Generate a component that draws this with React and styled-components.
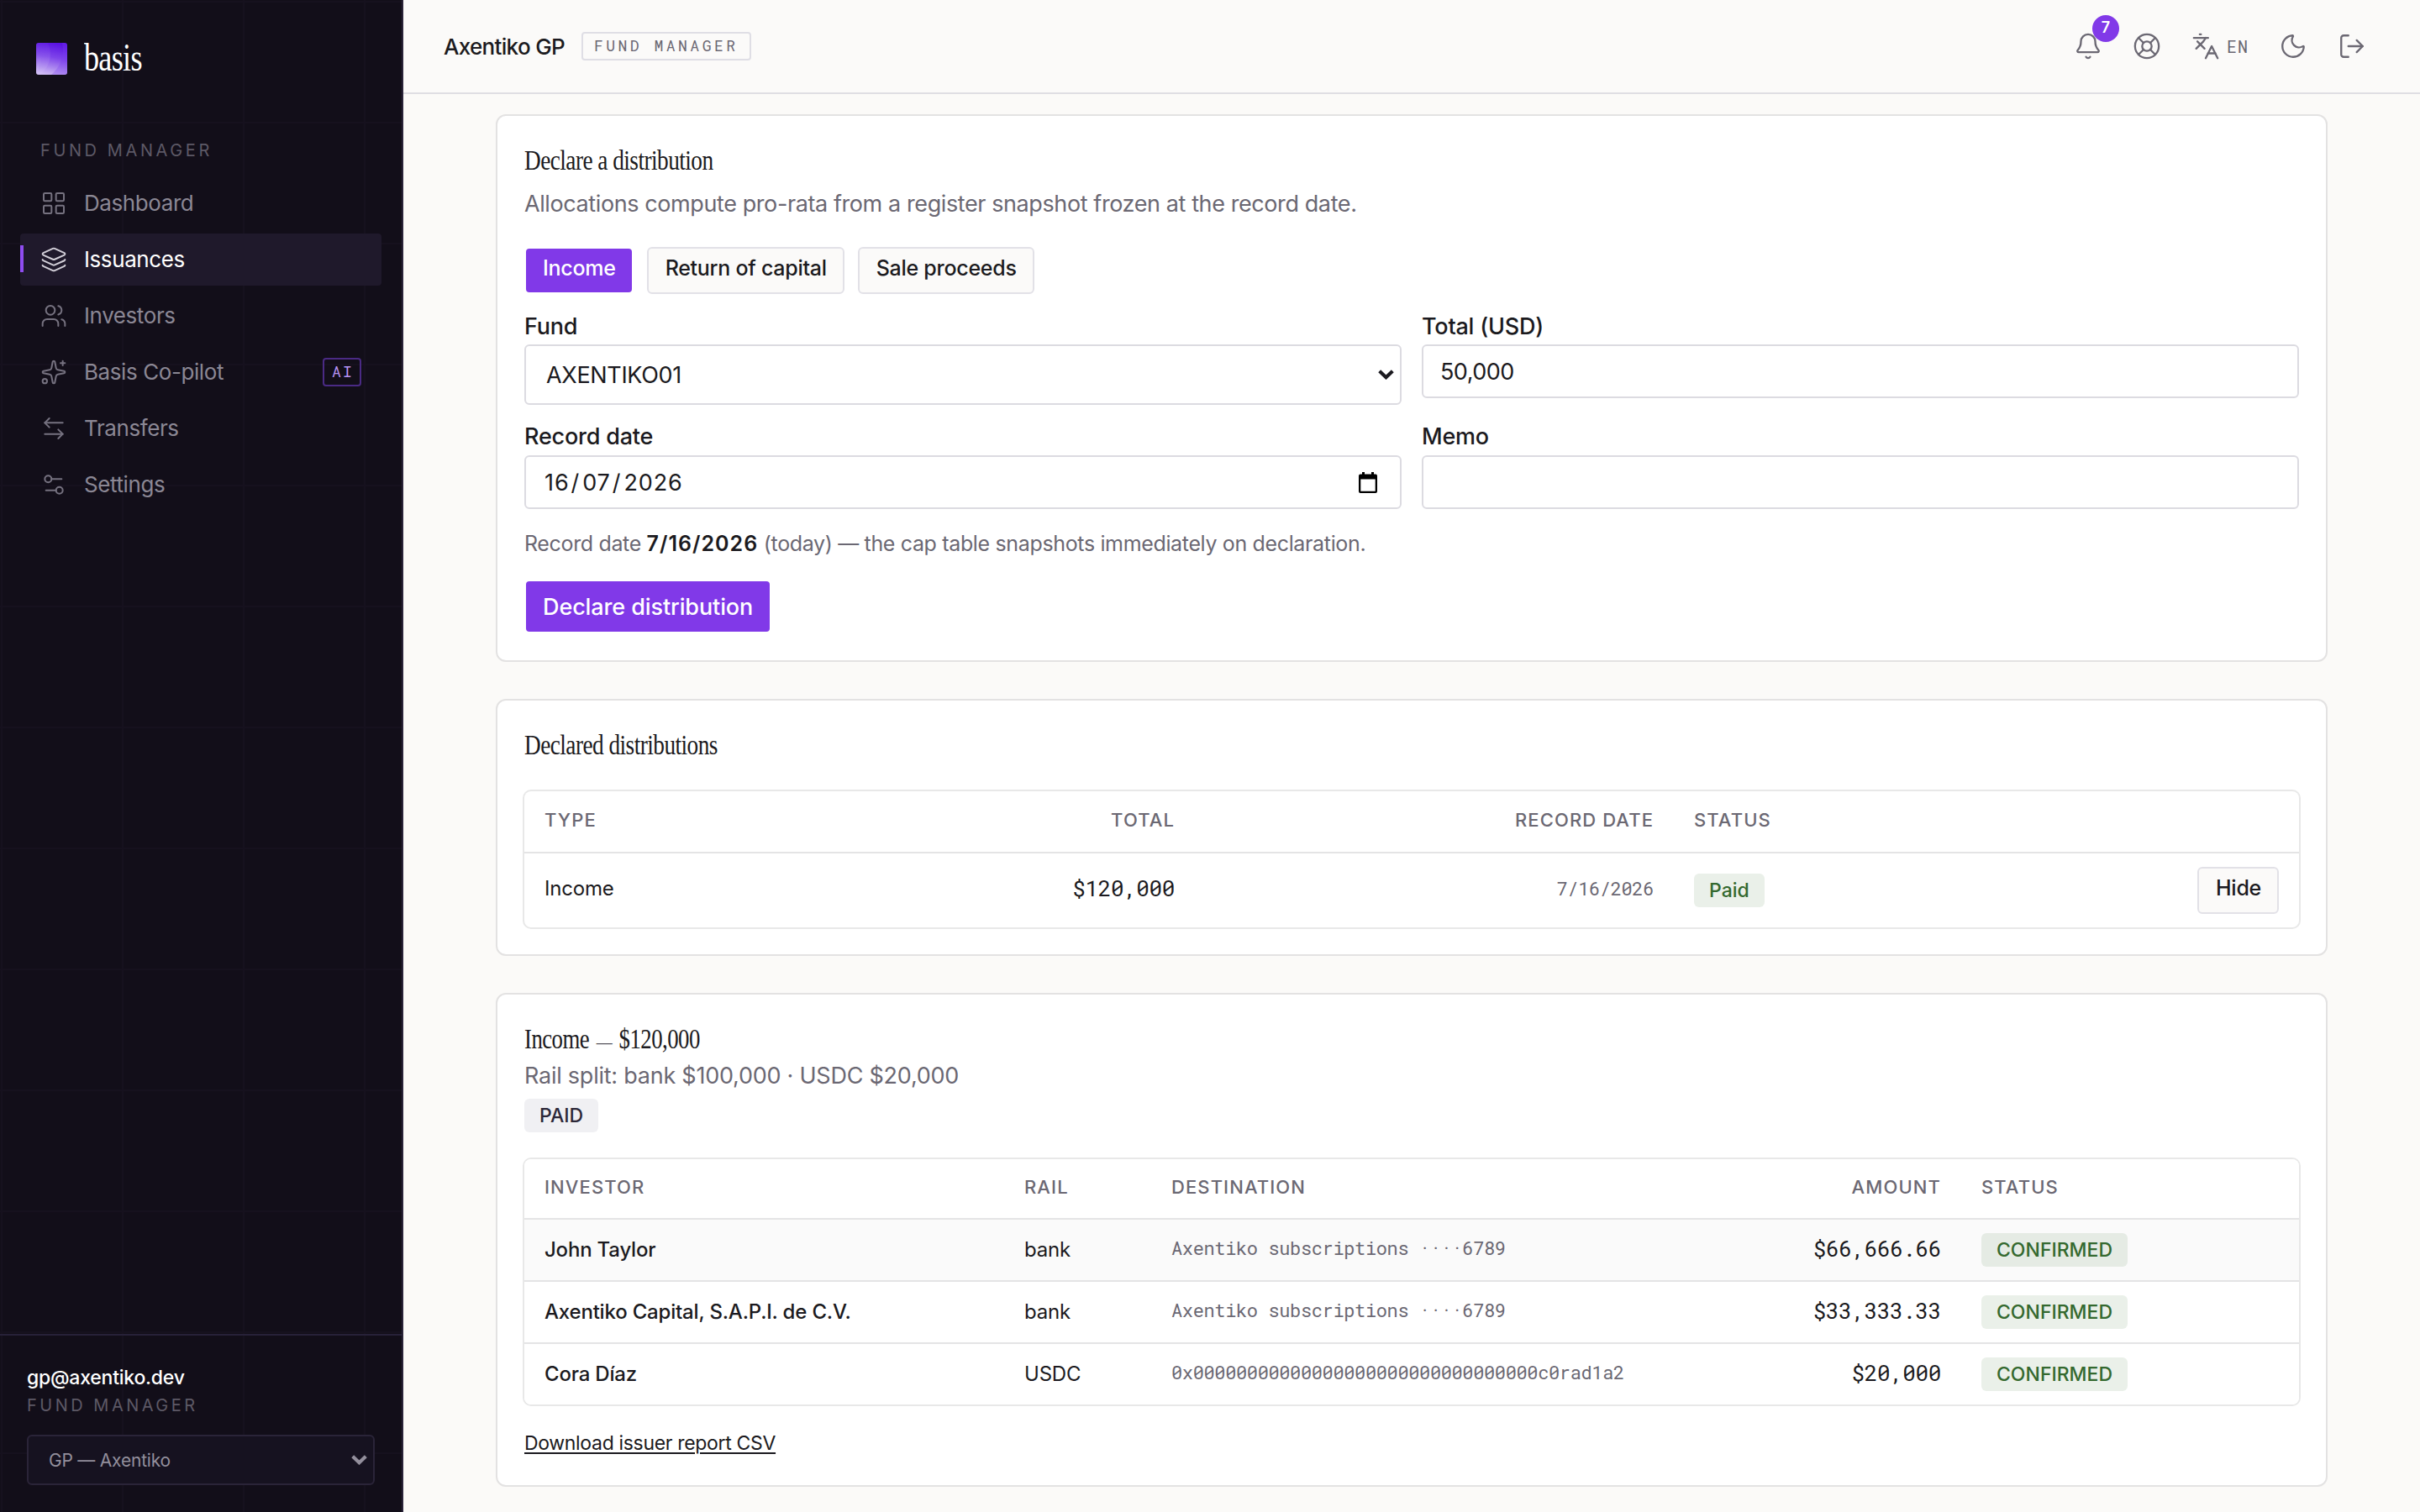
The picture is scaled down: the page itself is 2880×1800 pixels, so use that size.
import styled, { createGlobalStyle } from "styled-components"
import {
    ArrowLeftRight,
    Bell,
    Languages,
    Layers,
    LayoutGrid,
    LifeBuoy,
    LogOut,
    Moon,
    Settings2,
    Sparkles,
    Users,
} from "lucide-react"

const sans = `Inter, "Liberation Sans", sans-serif`;
const mono = `"Roboto Mono", "DejaVu Sans Mono", monospace`;
const serif = `"Liberation Serif", serif`;

const navItems = [
    { label: "Dashboard", icon: LayoutGrid },
    { label: "Issuances", icon: Layers, active: true },
    { label: "Investors", icon: Users },
    { label: "Basis Co-pilot", icon: Sparkles, tag: "AI" },
    { label: "Transfers", icon: ArrowLeftRight },
    { label: "Settings", icon: Settings2 },
];

const payouts = [
    { investor: "John Taylor", rail: "bank", destination: "Axentiko subscriptions ····6789", amount: "$66,666.66" },
    { investor: "Axentiko Capital, S.A.P.I. de C.V.", rail: "bank", destination: "Axentiko subscriptions ····6789", amount: "$33,333.33" },
    { investor: "Cora Díaz", rail: "USDC", destination: "0x00000000000000000000000000000000c0rad1a2", amount: "$20,000" },
];

function Logo() {
    return (
        <svg width="37" height="38" viewBox="0 0 37 38">
            <defs>
                <linearGradient id="base" x1="0.6" y1="0" x2="0.4" y2="1">
                    <stop offset="0" stopColor="#5a12e2" />
                    <stop offset="0.45" stopColor="#7f45ea" />
                    <stop offset="1" stopColor="#cdb8f3" />
                </linearGradient>
                <linearGradient id="wave" x1="0" y1="0" x2="0" y2="1">
                    <stop offset="0" stopColor="#6a2ae6" stopOpacity="0.6" />
                    <stop offset="1" stopColor="#d9cbf6" stopOpacity="0.6" />
                </linearGradient>
                <clipPath id="tile"><rect width="37" height="38" rx="3" /></clipPath>
            </defs>
            <g clipPath="url(#tile)">
                <rect width="37" height="38" fill="url(#base)" />
                <path d="M14 0C19 12 18 26 5 38H0V0Z" fill="url(#wave)" opacity="0.55" />
                <path d="M3 8C7 18 6 28 0 34Z" fill="url(#wave)" opacity="0.6" />
                <path d="M31 0C34 14 30 28 18 38H37V0Z" fill="#7a3cf0" opacity="0.28" />
            </g>
        </svg>
    )
}

function Chevron() {
    return (
        <svg width="19" height="12" viewBox="0 0 19 12" fill="none">
            <path d="M1.7 1.7L9.5 9.2L17.3 1.7" stroke="currentColor" strokeWidth="4.2" />
        </svg>
    )
}

function Calendar() {
    return (
        <svg width="22" height="25" viewBox="0 0 22 25" fill="#000">
            <path fillRule="evenodd" d="M4 0h3v2.5h8V0h3v2.5h2q2 0 2 2V23q0 2-2 2H2q-2 0-2-2V4.500q0-2 2-2h2ZM2.300 8.500V22.700h17.400V8.500Z" />
        </svg>
    )
}

function App() {
    return (
        <Page>
            <GlobalStyle />
            <Sidebar>
                <Brand>
                    <Logo />
                    <BrandName>basis</BrandName>
                </Brand>
                <NavTitle>FUND MANAGER</NavTitle>
                <Nav>
                    {navItems.map(({ label, icon: Icon, active, tag }) => (
                        <NavItem key={label} $active={active}>
                            <Icon size={32} strokeWidth={1.5} />
                            <NavLabel>{label}</NavLabel>
                            {tag && <NavTag>{tag}</NavTag>}
                        </NavItem>
                    ))}
                </Nav>
                <Account>
                    <Email>gp@axentiko.dev</Email>
                    <Role>FUND MANAGER</Role>
                    <OrgSelect>GP — Axentiko<Chevron /></OrgSelect>
                </Account>
            </Sidebar>

            <Main>
                <Header>
                    <OrgName>Axentiko GP</OrgName>
                    <RoleBadge>FUND MANAGER</RoleBadge>
                    <Actions>
                        <IconButton>
                            <Bell size={34} strokeWidth={1.65} />
                            <Count>7</Count>
                        </IconButton>
                        <IconButton><LifeBuoy size={34} strokeWidth={1.65} /></IconButton>
                        <LangButton><Languages size={34} strokeWidth={1.65} /><span>EN</span></LangButton>
                        <IconButton><Moon size={34} strokeWidth={1.65} /></IconButton>
                        <IconButton><LogOut size={34} strokeWidth={1.65} /></IconButton>
                    </Actions>
                </Header>

                <Content>
                    <Card>
                        <Title><span>Declare a distribution</span></Title>
                        <Subtitle>Allocations compute pro-rata from a register snapshot frozen at the record date.</Subtitle>
                        <Kinds>
                            <Button $primary>Income</Button>
                            <Button>Return of capital</Button>
                            <Button>Sale proceeds</Button>
                        </Kinds>
                        <Form>
                            <Field>
                                <Label>Fund</Label>
                                <FundSelect>AXENTIKO01<Chevron /></FundSelect>
                            </Field>
                            <Field>
                                <Label>Total (USD)</Label>
                                <Input defaultValue="50,000" />
                            </Field>
                            <Field>
                                <Label>Record date</Label>
                                <DateInput>
                                    <DateText>16<i>/</i>07<i>/</i>2026</DateText>
                                    <Calendar />
                                </DateInput>
                            </Field>
                            <Field>
                                <Label>Memo</Label>
                                <Input />
                            </Field>
                        </Form>
                        <Hint>Record date <b>7/16/2026</b> (today) — the cap table snapshots immediately on declaration.</Hint>
                        <Submit>Declare distribution</Submit>
                    </Card>

                    <Card>
                        <Title><span>Declared distributions</span></Title>
                        <Table>
                            <DistributionRow $head>
                                <HeadCell>TYPE</HeadCell>
                                <HeadCell $right>TOTAL</HeadCell>
                                <HeadCell $right>RECORD DATE</HeadCell>
                                <HeadCell>STATUS</HeadCell>
                                <HeadCell />
                            </DistributionRow>
                            <DistributionRow>
                                <Cell>Income</Cell>
                                <AmountCell $lift>$120,000</AmountCell>
                                <MonoCell $right>7/16/2026</MonoCell>
                                <StatusCell><Badge>Paid</Badge></StatusCell>
                                <ActionCell><Button>Hide</Button></ActionCell>
                            </DistributionRow>
                        </Table>
                    </Card>

                    <Card>
                        <Title $wide><span>Income <em>—</em> $120,000</span></Title>
                        <Split>Rail split: bank $100,000 · USDC $20,000</Split>
                        <PaidBadge>PAID</PaidBadge>
                        <Table>
                            <PayoutRow $head>
                                <HeadCell>INVESTOR</HeadCell>
                                <HeadCell>RAIL</HeadCell>
                                <HeadCell>DESTINATION</HeadCell>
                                <HeadCell $right>AMOUNT</HeadCell>
                                <HeadCell>STATUS</HeadCell>
                            </PayoutRow>
                            {payouts.map((p, i) => (
                                <PayoutRow key={p.investor} $hover={i === 0}>
                                    <NameCell>{p.investor}</NameCell>
                                    <RailCell>{p.rail}</RailCell>
                                    <MonoCell>{p.destination}</MonoCell>
                                    <AmountCell>{p.amount}</AmountCell>
                                    <StatusCell><Badge>CONFIRMED</Badge></StatusCell>
                                </PayoutRow>
                            ))}
                        </Table>
                        <ReportLink>Download issuer report CSV</ReportLink>
                    </Card>
                </Content>
            </Main>
        </Page>
    )
}

const GlobalStyle = createGlobalStyle`
*, *::before, *::after {
box-sizing: border-box;
}
body {
margin: 0;
background: #fbfaf8;
color: #1b1a20;
font-family: ${sans};
}
`;

const Page = styled.div`
display: flex;
width: 100%;
height: 100vh;
overflow: hidden;
`;

const Sidebar = styled.aside`
display: flex;
flex-direction: column;
width: 480px;
flex-shrink: 0;
border-right: 2px solid #2a2439;
background-color: #120e19;
background-image:
linear-gradient(to right, #16111e 2px, transparent 2px),
linear-gradient(to bottom, #16111e 2px, transparent 2px);
background-size: 144px 144px;
background-position: 1px 1px;
`;

const Brand = styled.div`
display: flex;
align-items: center;
gap: 20px;
height: 38px;
margin: 51px 0 0 43px;
`;

const BrandName = styled.span`
padding-bottom: 4px;
font-family: ${serif};
font-size: 47px;
line-height: 38px;
letter-spacing: -0.02em;
color: #fff;
transform: scaleX(0.77);
transform-origin: left;
`;

const NavTitle = styled.div`
margin: 75px 0 0 48px;
font-size: 20px;
line-height: 30px;
letter-spacing: 0.18em;
color: #5d5966;
`;

const Nav = styled.nav`
display: flex;
flex-direction: column;
gap: 5px;
margin: 17px 24px 0;
`;

const NavItem = styled.a`
display: flex;
align-items: center;
gap: 20px;
position: relative;
height: 62px;
padding: 0 24px;
border-radius: 4px;
background: ${(p) => (p.$active ? "#1f192b" : "transparent")};
color: ${(p) => (p.$active ? "#fff" : "#8b8794")};
svg {
color: ${(p) => (p.$active ? "#d2cfd8" : "#767280")};
}
&::before {
content: "";
display: ${(p) => (p.$active ? "block" : "none")};
position: absolute;
left: 0;
top: 14px;
width: 4px;
height: 32px;
background: #8f4df0;
}
`;

const NavLabel = styled.span`
padding-bottom: 2px;
font-size: 26px;
letter-spacing: -0.016em;
`;

const NavTag = styled.span`
display: flex;
justify-content: center;
width: 46px;
height: 34px;
margin-left: auto;
padding-left: 2px;
border: 2px solid #4a2a84;
border-radius: 4px;
font-family: ${mono};
font-size: 18px;
line-height: 28px;
letter-spacing: 0.12em;
color: #b794f4;
`;

const Account = styled.div`
margin-top: auto;
padding: 33px 32px 32px;
border-top: 2px solid #272138;
`;

const Email = styled.div`
font-size: 23px;
line-height: 34px;
font-weight: 500;
letter-spacing: -0.01em;
color: #fff;
`;

const Role = styled.div`
padding-top: 1px;
font-size: 20px;
line-height: 30px;
letter-spacing: 0.175em;
color: #5d5966;
`;

const OrgSelect = styled.div`
display: flex;
align-items: center;
justify-content: space-between;
width: 414px;
height: 60px;
margin-top: 20px;
padding: 0 7px 0 24px;
border: 2px solid #2a2438;
border-radius: 6px;
background: #161220;
font-size: 21px;
letter-spacing: -0.01em;
color: #938f9c;
`;

const Main = styled.main`
display: flex;
flex-direction: column;
flex: 1;
min-width: 0;
`;

const Header = styled.header`
display: flex;
align-items: center;
height: 112px;
flex-shrink: 0;
padding: 0 48px;
border-bottom: 2px solid #dfdee3;
background: #fbfaf9;
`;

const OrgName = styled.span`
font-size: 26px;
font-weight: 500;
letter-spacing: -0.026em;
`;

const RoleBadge = styled.span`
height: 34px;
width: 202px;
margin-left: 20px;
padding-left: 13px;
border: 2px solid #dfdee5;
border-radius: 4px;
font-family: ${mono};
font-size: 18px;
line-height: 28px;
letter-spacing: 3.5px;
color: #6b6873;
`;

const Actions = styled.div`
display: flex;
gap: 4px;
margin-left: auto;
color: #6b6873;
`;

const IconButton = styled.div`
display: flex;
align-items: center;
justify-content: center;
position: relative;
width: 66px;
height: 66px;
`;

const LangButton = styled.div`
display: flex;
align-items: center;
gap: 8px;
width: 100px;
height: 66px;
padding-left: 16px;
font-family: ${mono};
font-size: 20px;
letter-spacing: 1px;
`;

const Count = styled.span`
position: absolute;
top: -4px;
right: -4px;
width: 32px;
height: 32px;
border-radius: 50%;
background: #8139e8;
color: #fff;
font-family: ${sans};
font-size: 18px;
line-height: 30px;
font-weight: 600;
text-align: center;
`;

const Content = styled.div`
display: flex;
flex-direction: column;
gap: 44px;
padding: 24px 110px 30px;
`;

const Card = styled.section`
padding: 32px;
border: 2px solid #e3e2e2;
border-radius: 12px;
background: #fff;
`;

const Title = styled.h2`
margin: 0;
height: 42px;
font-family: ${serif};
font-size: 34px;
line-height: 42px;
font-weight: 400;
letter-spacing: -0.02em;
span {
display: inline-block;
white-space: nowrap;
transform: scaleX(${(p) => (p.$wide ? 0.788 : 0.803)});
transform-origin: left;
}
em {
margin: 0 3px;
font-size: 24px;
font-style: normal;
color: #55535b;
}
`;

const Subtitle = styled.p`
margin: 10px 0 0;
font-size: 27px;
line-height: 42px;
letter-spacing: -0.015em;
color: #6b6873;
`;

const Kinds = styled.div`
display: flex;
gap: 16px;
margin-top: 30px;
`;

const Button = styled.button`
height: 56px;
padding: 0 19px 6px 20px;
border: 2px solid ${(p) => (p.$primary ? "transparent" : "#e2e1e7")};
border-radius: 6px;
background: ${(p) => (p.$primary ? "#8139e8" : "#fbfaf9")};
background-clip: padding-box;
color: ${(p) => (p.$primary ? "#fff" : "#1b1a20")};
font-family: ${sans};
font-size: 25px;
font-weight: 500;
letter-spacing: -0.011em;
`;

const Form = styled.div`
display: grid;
grid-template-columns: 1fr 1fr;
gap: 20px 24px;
margin-top: 21px;
align-items: start;
`;

const Field = styled.div`
display: flex;
flex-direction: column;
gap: 3px;
&:nth-child(n + 3) {
gap: 4px;
}
`;

const Label = styled.label`
font-size: 27px;
line-height: 36px;
font-weight: 500;
letter-spacing: -0.008em;
`;

const Input = styled.input`
width: 100%;
height: 64px;
padding: 0 20px;
border: 2px solid #dcdbe1;
border-radius: 6px;
background: #fff;
color: #1b1a20;
font-family: ${sans};
font-size: 27px;
letter-spacing: -0.02em;
`;

const FundSelect = styled.div`
display: flex;
align-items: center;
justify-content: space-between;
height: 72px;
padding: 0 7px 0 24px;
border: 2px solid #dcdbe1;
border-radius: 6px;
font-size: 27px;
letter-spacing: -0.012em;
`;

const DateInput = styled.div`
display: flex;
align-items: center;
justify-content: space-between;
height: 64px;
padding: 0 27px 0 22px;
border: 2px solid #dcdbe1;
border-radius: 6px;
font-size: 27px;
`;

const DateText = styled.span`
letter-spacing: 0.9px;
i {
margin: 0 3px 0 2px;
font-style: normal;
}
`;

const Hint = styled.p`
margin: 20px 0 0;
padding-top: 1px;
font-size: 25px;
line-height: 40px;
letter-spacing: -0.014em;
color: #6b6873;
b {
font-weight: 600;
letter-spacing: 0.04em;
color: #1b1a20;
}
`;

const Submit = styled(Button).attrs({ $primary: true })`
display: block;
height: 64px;
margin-top: 23px;
padding: 0 20px;
font-size: 27px;
letter-spacing: -0.004em;
`;

const Table = styled.div`
margin-top: 34px;
border-radius: 8px;
box-shadow: 0 0 0 2px #e8e8e8;
overflow: hidden;
`;

const DistributionRow = styled.div`
display: grid;
grid-template-columns: 376px 422px 570px 408px 336px;
align-items: center;
height: ${(p) => (p.$head ? "74px" : "88px")};
border-bottom: ${(p) => (p.$head ? "2px solid #e4e4e5" : "none")};
`;

const PayoutRow = styled.div`
display: grid;
grid-template-columns: 571px 175px 700px 264px 402px;
align-items: center;
height: ${(p) => (p.$head ? "72px" : "74px")};
border-bottom: 2px solid #e4e4e5;
background: ${(p) => (p.$hover ? "#fafafa" : "#fff")};
&:last-child {
height: 72px;
border-bottom: none;
}
`;

const HeadCell = styled.div`
padding: 0 24px 4px;
font-size: 22px;
line-height: 28px;
font-weight: 500;
letter-spacing: 0.05em;
text-align: ${(p) => (p.$right ? "right" : "left")};
color: #6b6873;
`;

const Cell = styled.div`
padding: 0 24px 4px;
font-size: 24px;
line-height: 36px;
letter-spacing: -0.008em;
`;

const NameCell = styled(Cell)`
padding-bottom: 1px;
font-weight: 500;
`;

const RailCell = styled(Cell)`
padding-bottom: 1px;
`;

const AmountCell = styled(Cell)`
padding-bottom: ${(p) => (p.$lift ? "6px" : "4px")};
font-family: ${mono};
font-size: 26px;
letter-spacing: -0.015em;
text-align: right;
`;

const MonoCell = styled(Cell)`
font-family: ${mono};
font-size: 22px;
letter-spacing: -0.017em;
text-align: ${(p) => (p.$right ? "right" : "left")};
color: #6b6873;
`;

const StatusCell = styled.div`
display: flex;
padding: 0 24px;
`;

const ActionCell = styled.div`
display: flex;
justify-content: flex-end;
padding-right: 24px;
`;

const Badge = styled.span`
height: 40px;
padding: 0 18px;
border-radius: 6px;
background: rgba(47, 107, 43, 0.1);
color: #34692f;
font-size: 23px;
line-height: 40px;
font-weight: 500;
`;

const Split = styled.p`
margin: 2px 0 0;
font-size: 27px;
line-height: 42px;
letter-spacing: -0.009em;
color: #6b6873;
`;

const PaidBadge = styled(Badge)`
display: block;
width: max-content;
margin: 6px 0 -2px;
background: #f0f0f3;
color: #2c2838;
`;

const ReportLink = styled.a`
display: block;
width: max-content;
margin-top: 28px;
font-size: 23px;
line-height: 36px;
letter-spacing: -0.014em;
text-decoration: underline;
text-decoration-thickness: 2px;
text-underline-offset: 3px;
`;

export default App
